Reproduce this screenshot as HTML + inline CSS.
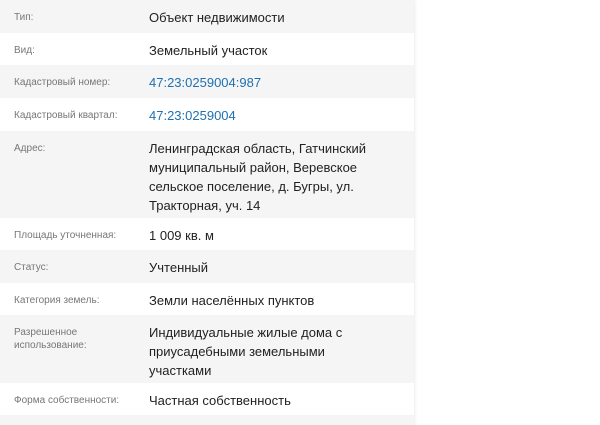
<!DOCTYPE html>
<html><head><meta charset="utf-8"><style>
body{margin:0;width:600px;height:419px;background:#fff;font-family:"Liberation Sans","DejaVu Sans",sans-serif;overflow:hidden}
.t{position:absolute;left:0;top:0;width:414px;box-shadow:1px 0 3px rgba(0,0,0,0.08)}
.r{position:relative;box-sizing:border-box;padding-top:8px}
.g{background:#f5f5f5}.w{background:#fff}
.l{position:absolute;left:14px;top:11px;font-size:10px;color:#777;line-height:13px;width:120px}
.v{margin-left:149px;font-size:13px;color:#222;line-height:19px;width:236px}
.a{color:#1f70b0}
</style></head><body>
<div class="t">
<div class="r g" style="height:33px"><div class="l">Тип:</div><div class="v">Объект недвижимости</div></div>
<div class="r w" style="height:32px"><div class="l">Вид:</div><div class="v">Земельный участок</div></div>
<div class="r g" style="height:33px"><div class="l">Кадастровый номер:</div><div class="v a">47:23:0259004:987</div></div>
<div class="r w" style="height:33px"><div class="l">Кадастровый квартал:</div><div class="v a">47:23:0259004</div></div>
<div class="r g" style="height:87px"><div class="l">Адрес:</div><div class="v">Ленинградская область, Гатчинский муниципальный район, Веревское сельское поселение, д. Бугры, ул. Тракторная, уч. 14</div></div>
<div class="r w" style="height:32px"><div class="l">Площадь уточненная:</div><div class="v">1 009 кв. м</div></div>
<div class="r g" style="height:33px"><div class="l">Статус:</div><div class="v">Учтенный</div></div>
<div class="r w" style="height:32px"><div class="l">Категория земель:</div><div class="v">Земли населённых пунктов</div></div>
<div class="r g" style="height:68px"><div class="l">Разрешенное<br>использование:</div><div class="v">Индивидуальные жилые дома с<br>приусадебными земельными<br>участками</div></div>
<div class="r w" style="height:32px"><div class="l">Форма собственности:</div><div class="v">Частная собственность</div></div>
<div class="r g" style="height:10px"></div>
</div>
</body></html>
